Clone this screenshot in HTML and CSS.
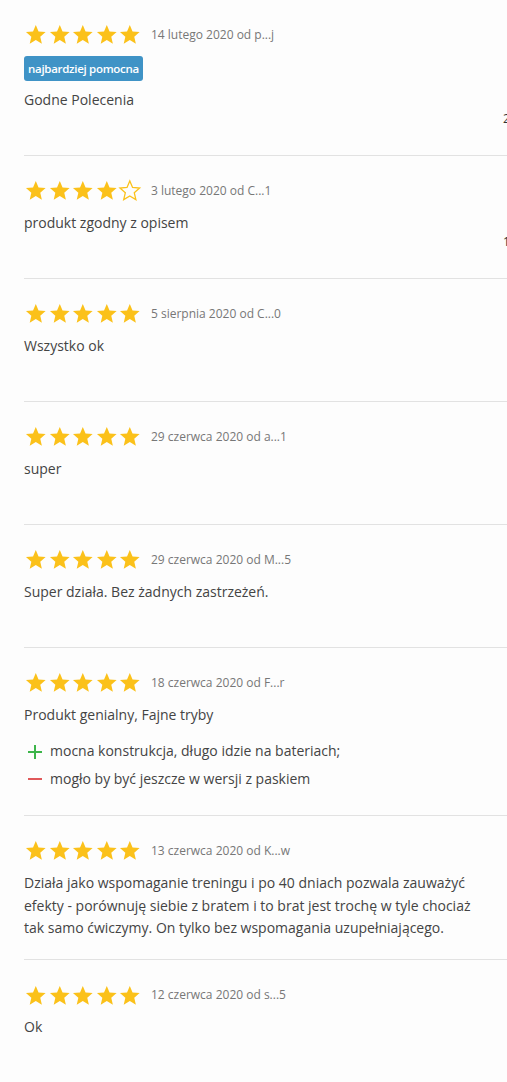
FILE: index.html
```html
<!DOCTYPE html>
<html lang="pl">
<head>
<meta charset="utf-8">
<title>Opinie</title>
<link rel="stylesheet" href="styles.css">
</head>
<body>
<svg width="0" height="0" class="defs">
  <defs>
    <path id="star" d="M12 17.27L18.18 21l-1.64-7.03L22 9.24l-7.19-.61L12 2 9.19 8.63 2 9.24l5.46 4.73L5.82 21z"/>
  </defs>
</svg>
<div class="reviews">

  <div class="review">
    <div class="meta">
      <div class="stars">
        <svg viewBox="0 0 24 24"><use href="#star"/></svg><svg viewBox="0 0 24 24"><use href="#star"/></svg><svg viewBox="0 0 24 24"><use href="#star"/></svg><svg viewBox="0 0 24 24"><use href="#star"/></svg><svg viewBox="0 0 24 24"><use href="#star"/></svg>
      </div>
      <span class="date">14 lutego 2020 od p...j</span>
    </div>
    <div class="badge">najbardziej pomocna</div>
    <div class="body">
      <p class="text">Godne Polecenia</p>
      <div class="helpful">2</div>
    </div>
  </div>

  <div class="review">
    <div class="meta">
      <div class="stars">
        <svg viewBox="0 0 24 24"><use href="#star"/></svg><svg viewBox="0 0 24 24"><use href="#star"/></svg><svg viewBox="0 0 24 24"><use href="#star"/></svg><svg viewBox="0 0 24 24"><use href="#star"/></svg><svg viewBox="0 0 24 24" class="empty"><use href="#star"/></svg>
      </div>
      <span class="date">3 lutego 2020 od C...1</span>
    </div>
    <div class="body">
      <p class="text">produkt zgodny z opisem</p>
      <div class="helpful">1</div>
    </div>
  </div>

  <div class="review">
    <div class="meta">
      <div class="stars">
        <svg viewBox="0 0 24 24"><use href="#star"/></svg><svg viewBox="0 0 24 24"><use href="#star"/></svg><svg viewBox="0 0 24 24"><use href="#star"/></svg><svg viewBox="0 0 24 24"><use href="#star"/></svg><svg viewBox="0 0 24 24"><use href="#star"/></svg>
      </div>
      <span class="date">5 sierpnia 2020 od C...0</span>
    </div>
    <div class="body">
      <p class="text">Wszystko ok</p>
    </div>
  </div>

  <div class="review">
    <div class="meta">
      <div class="stars">
        <svg viewBox="0 0 24 24"><use href="#star"/></svg><svg viewBox="0 0 24 24"><use href="#star"/></svg><svg viewBox="0 0 24 24"><use href="#star"/></svg><svg viewBox="0 0 24 24"><use href="#star"/></svg><svg viewBox="0 0 24 24"><use href="#star"/></svg>
      </div>
      <span class="date">29 czerwca 2020 od a...1</span>
    </div>
    <div class="body">
      <p class="text">super</p>
    </div>
  </div>

  <div class="review">
    <div class="meta">
      <div class="stars">
        <svg viewBox="0 0 24 24"><use href="#star"/></svg><svg viewBox="0 0 24 24"><use href="#star"/></svg><svg viewBox="0 0 24 24"><use href="#star"/></svg><svg viewBox="0 0 24 24"><use href="#star"/></svg><svg viewBox="0 0 24 24"><use href="#star"/></svg>
      </div>
      <span class="date">29 czerwca 2020 od M...5</span>
    </div>
    <div class="body">
      <p class="text">Super działa. Bez żadnych zastrzeżeń.</p>
    </div>
  </div>

  <div class="review">
    <div class="meta">
      <div class="stars">
        <svg viewBox="0 0 24 24"><use href="#star"/></svg><svg viewBox="0 0 24 24"><use href="#star"/></svg><svg viewBox="0 0 24 24"><use href="#star"/></svg><svg viewBox="0 0 24 24"><use href="#star"/></svg><svg viewBox="0 0 24 24"><use href="#star"/></svg>
      </div>
      <span class="date">18 czerwca 2020 od F...r</span>
    </div>
    <div class="body">
      <p class="text">Produkt genialny, Fajne tryby</p>
      <ul class="proscons">
        <li class="pro"><svg class="sign" viewBox="0 0 14 14"><path d="M0 7H14M7 0V14"/></svg>mocna konstrukcja, długo idzie na bateriach;</li>
        <li class="con"><svg class="sign" viewBox="0 0 14 14"><path d="M0 7H14"/></svg>mogło by być jeszcze w wersji z paskiem</li>
      </ul>
    </div>
  </div>

  <div class="review">
    <div class="meta">
      <div class="stars">
        <svg viewBox="0 0 24 24"><use href="#star"/></svg><svg viewBox="0 0 24 24"><use href="#star"/></svg><svg viewBox="0 0 24 24"><use href="#star"/></svg><svg viewBox="0 0 24 24"><use href="#star"/></svg><svg viewBox="0 0 24 24"><use href="#star"/></svg>
      </div>
      <span class="date">13 czerwca 2020 od K...w</span>
    </div>
    <div class="body">
      <p class="text">Działa jako wspomaganie treningu i po 40 dniach pozwala zauważyć efekty - porównuję siebie z bratem i to brat jest trochę w tyle chociaż tak samo ćwiczymy. On tylko bez wspomagania uzupełniającego.</p>
    </div>
  </div>

  <div class="review">
    <div class="meta">
      <div class="stars">
        <svg viewBox="0 0 24 24"><use href="#star"/></svg><svg viewBox="0 0 24 24"><use href="#star"/></svg><svg viewBox="0 0 24 24"><use href="#star"/></svg><svg viewBox="0 0 24 24"><use href="#star"/></svg><svg viewBox="0 0 24 24"><use href="#star"/></svg>
      </div>
      <span class="date">12 czerwca 2020 od s...5</span>
    </div>
    <div class="body">
      <p class="text">Ok</p>
    </div>
  </div>

</div>
</body>
</html>
```

FILE: styles.css
```css
html, body {
  margin: 0;
  padding: 0;
  background: #fdfdfd;
  overflow-x: hidden;
}

body {
  font-family: "Open Sans", "Liberation Sans", sans-serif;
  color: #444;
}

.defs {
  position: absolute;
  width: 0;
  height: 0;
}

.reviews {
  margin-left: 24px;
  width: 700px;
}

.review {
  padding: 24px 0 20px;
  border-bottom: 1px solid #e2e2e2;
}

.meta {
  display: flex;
  align-items: center;
  height: 22px;
  margin-bottom: 10px;
}

.stars {
  display: flex;
  align-items: center;
}

.stars svg {
  width: 23.6px;
  height: 23.6px;
  fill: #fbc11a;
  display: block;
}

.stars svg.empty {
  fill: none;
  stroke: #fbc11a;
  stroke-width: 1.3;
}

.date {
  margin-left: 9px;
  font-size: 12px;
  color: #777;
  line-height: 16px;
}

.badge {
  display: inline-block;
  margin: -1px 0 8px;
  height: 25px;
  line-height: 25px;
  padding: 0 4px;
  background: #3f93c6;
  color: #fff;
  font-size: 11.5px;
  font-weight: 600;
  border-radius: 3px;
  letter-spacing: -0.3px;
}

.body {
  min-height: 46px;
}

.text {
  margin: 0;
  width: 470px;
  font-size: 14px;
  line-height: 22.4px;
}

.helpful {
  padding-left: 479px;
  font-size: 12px;
  line-height: 16px;
  color: #333;
  white-space: nowrap;
}

.proscons {
  list-style: none;
  margin: 14px 0 0;
  padding: 0;
}

.proscons li {
  display: flex;
  align-items: center;
  font-size: 14px;
  line-height: 22.4px;
  margin-bottom: 5px;
}

.sign {
  width: 14px;
  height: 14px;
  margin: 0 8px 0 4px;
  flex: none;
  stroke-width: 2;
  fill: none;
}

.pro .sign {
  stroke: #3db54a;
}

.con .sign {
  stroke: #e0585a;
}
```
